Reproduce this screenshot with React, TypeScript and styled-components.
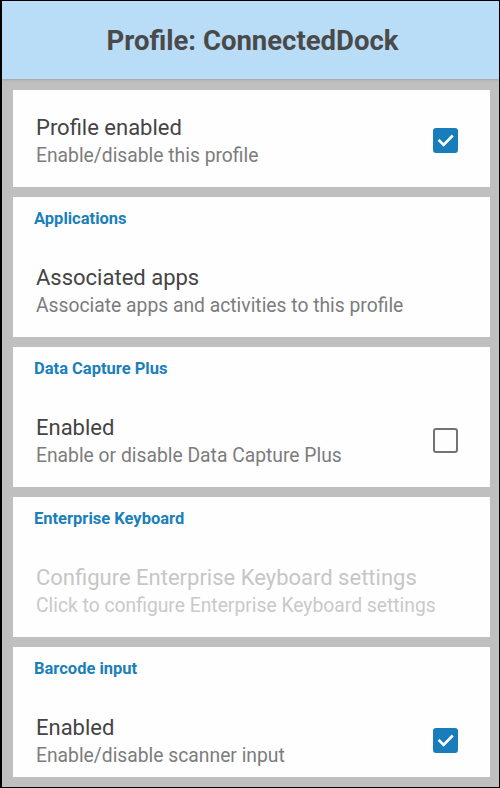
import React from "react";
import styled, { createGlobalStyle } from "styled-components";

const GlobalStyle = createGlobalStyle`
  html, body { margin: 0; padding: 0; background: #bdbdbd; }
  body { font-family: Roboto, "Noto Sans", Arial, sans-serif; }
  * { box-sizing: border-box; }
`;

const Frame = styled.div`
  width: 500px;
  height: 788px;
  border: 1px solid #000;
  border-left-width: 2px;
  background: #bfbfbf;
  display: flex;
  flex-direction: column;
  overflow: hidden;
`;

const Header = styled.header`
  height: 78px;
  flex: 0 0 78px;
  background: #b9ddf7;
  display: flex;
  align-items: center;
  justify-content: center;
  box-shadow: 0 1px 2px rgba(0, 0, 0, 0.15);
`;

const Title = styled.h1`
  margin: 0;
  font-family: Roboto, Arial, sans-serif;
  font-weight: 700;
  font-size: 27.5px;
  color: #4a4a4a;
  padding-left: 4px;
`;

const Body = styled.main`
  flex: 1;
  padding: 11px 9px 10px 11px;
  display: flex;
  flex-direction: column;
  min-height: 0;
`;

const Viewport = styled.div`
  flex: 1;
  overflow: hidden;
  display: flex;
  flex-direction: column;
  gap: 10px;
`;

const Card = styled.section`
  background: #fefefe;
  flex: 0 0 auto;
`;

const Category = styled.div`
  padding: 12px 0 11px 21px;
  font-size: 16.5px;
  line-height: 20px;
  font-weight: 700;
  color: #1a80bb;
`;

const Row = styled.div`
  display: flex;
  align-items: flex-start;
  padding: 25px 32px 20px 23px;
  min-height: 97px;
`;

const Texts = styled.div`
  flex: 1;
  display: flex;
  flex-direction: column;
  white-space: nowrap;
`;

const RowTitle = styled.div<{ $disabled?: boolean }>`
  font-size: 22px;
  line-height: 25px;
  color: ${(p) => (p.$disabled ? "#c6c6c6" : "#444444")};
`;

const RowSub = styled.div<{ $disabled?: boolean }>`
  margin-top: 5px;
  font-size: 19.3px;
  line-height: 22px;
  color: ${(p) => (p.$disabled ? "#c9c9c9" : "#7c7c7c")};
`;

const Box = styled.div<{ $checked: boolean }>`
  width: 25px;
  height: 25px;
  margin-top: 13px;
  border-radius: 3px;
  flex: 0 0 25px;
  background: ${(p) => (p.$checked ? "#1a7dbb" : "transparent")};
  border: ${(p) => (p.$checked ? "none" : "2.5px solid #737373")};
  display: flex;
  align-items: center;
  justify-content: center;
`;

const Check = () => (
  <svg width="25" height="25" viewBox="0 0 25 25">
    <path
      d="M6.5 12.8 L10.6 16.8 L18.8 8.4"
      fill="none"
      stroke="#fff"
      strokeWidth="2.6"
      strokeLinecap="square"
    />
  </svg>
);

const Checkbox = ({ checked }: { checked: boolean }) => (
  <Box $checked={checked}>{checked && <Check />}</Box>
);

type Item = {
  category?: string;
  title: string;
  sub: string;
  checkbox?: boolean;
  disabled?: boolean;
};

const items: Item[] = [
  { title: "Profile enabled", sub: "Enable/disable this profile", checkbox: true },
  {
    category: "Applications",
    title: "Associated apps",
    sub: "Associate apps and activities to this profile",
  },
  {
    category: "Data Capture Plus",
    title: "Enabled",
    sub: "Enable or disable Data Capture Plus",
    checkbox: false,
  },
  {
    category: "Enterprise Keyboard",
    title: "Configure Enterprise Keyboard settings",
    sub: "Click to configure Enterprise Keyboard settings",
    disabled: true,
  },
  {
    category: "Barcode input",
    title: "Enabled",
    sub: "Enable/disable scanner input",
    checkbox: true,
  },
];

export default function App() {
  return (
    <>
      <GlobalStyle />
      <Frame>
        <Header>
          <Title>Profile: ConnectedDock</Title>
        </Header>
        <Body>
          <Viewport>
            {items.map((it, i) => (
              <Card key={i}>
                {it.category && <Category>{it.category}</Category>}
                <Row>
                  <Texts>
                    <RowTitle $disabled={it.disabled}>{it.title}</RowTitle>
                    <RowSub $disabled={it.disabled}>{it.sub}</RowSub>
                  </Texts>
                  {it.checkbox !== undefined && <Checkbox checked={it.checkbox} />}
                </Row>
              </Card>
            ))}
          </Viewport>
        </Body>
      </Frame>
    </>
  );
}
